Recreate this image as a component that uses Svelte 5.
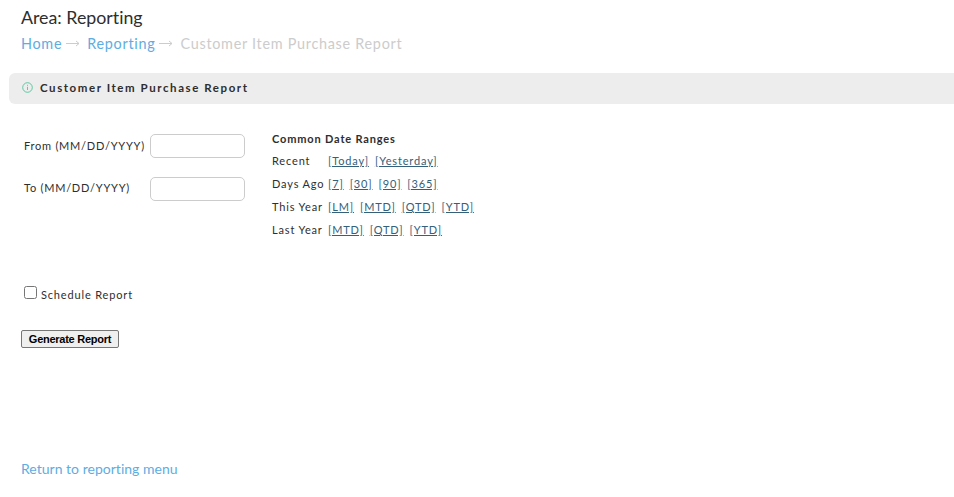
<script lang="ts">
  interface DateRange {
    label: string
    links: string[]
  }

  const ranges: DateRange[] = [
    { label: 'Recent', links: ['Today', 'Yesterday'] },
    { label: 'Days Ago', links: ['7', '30', '90', '365'] },
    { label: 'This Year', links: ['LM', 'MTD', 'QTD', 'YTD'] },
    { label: 'Last Year', links: ['MTD', 'QTD', 'YTD'] },
  ]

  let from = $state('')
  let to = $state('')
  let scheduled = $state(false)
</script>

{#snippet arrow()}
  <svg class="arrow" viewBox="0 0 14 8" width="14" height="8" fill="none" stroke="currentColor" aria-hidden="true">
    <path d="M0 4.5h13M10 2l3 2.5L10 7" />
  </svg>
{/snippet}

<main>
  <h1>Area: Reporting</h1>
  <nav class="crumbs">
    <a href="#home">Home</a>
    {@render arrow()}
    <a href="#reporting">Reporting</a>
    {@render arrow()}
    <span>Customer Item Purchase Report</span>
  </nav>

  <h2 class="bar">
    <svg viewBox="0 0 11 11" width="11" height="11" fill="none" stroke="currentColor" aria-hidden="true">
      <circle cx="5.5" cy="5.5" r="4.8" stroke-width=".9" />
      <path d="M5.5 2.8v1M5.5 4.8v3.2" stroke-width=".9" />
    </svg>
    Customer Item Purchase Report
  </h2>

  <form onsubmit={(e) => e.preventDefault()}>
    <div class="columns">
      <div class="dates">
        <label for="from">From (MM/DD/YYYY)</label>
        <input id="from" type="text" bind:value={from} />
        <label class="to" for="to">To (MM/DD/YYYY)</label>
        <input id="to" type="text" bind:value={to} />
      </div>

      <div class="ranges">
        <strong>Common Date Ranges</strong>
        {#each ranges as range}
          <div class="range">
            <span class="range-label">{range.label}</span>
            {#each range.links as link}
              <a href="#range">[{link}]</a>
            {/each}
          </div>
        {/each}
      </div>
    </div>

    <label class="schedule">
      <input type="checkbox" bind:checked={scheduled} />
      <span>Schedule Report</span>
    </label>

    <button type="submit">Generate Report</button>
  </form>

  <a class="return" href="#menu">Return to reporting menu</a>
</main>

<style>
  :global(body) {
    background: #fff;
    overflow: hidden;
  }

  main {
    padding: 6px 0 0 21px;
    font-family: Lato, sans-serif;
    font-size: 11px;
    font-variant-ligatures: none;
    letter-spacing: 0.84px;
    color: #2e2e2e;
  }

  h1 {
    margin: 0;
    font-size: 17.8px;
    font-weight: 400;
    line-height: 22px;
    letter-spacing: 0;
  }

  .crumbs {
    display: flex;
    align-items: center;
    height: 20px;
    margin-top: 5px;
    font-size: 14.4px;
    font-weight: 400;
    letter-spacing: 0.72px;
    color: #ccc;
  }
  .crumbs a { color: #5dade2; text-decoration: none; }
  .arrow { margin: 0 7px 0 4px; }

  .bar {
    display: flex;
    align-items: center;
    gap: 7px;
    height: 31px;
    box-sizing: border-box;
    margin: 20px 0 0 -12px;
    padding: 0 0 2px 13px;
    background: #ededed;
    border-radius: 6px 0 0 6px;
    font-size: 11.5px;
    font-weight: 700;
    letter-spacing: 1.57px;
  }
  .bar svg { color: #50c49a; margin-top: -1px; }

  .columns {
    display: flex;
    align-items: flex-start;
    gap: 27px;
    padding: 27px 0 0 3px;
  }

  .dates {
    display: grid;
    grid-template-columns: 126px 95px;
    row-gap: 19px;
    padding-top: 3px;
    line-height: 24px;
    letter-spacing: 0.76px;
  }
  .dates .to { line-height: 22px; }
  .dates input {
    box-sizing: border-box;
    width: 95px;
    height: 24px;
    border: 1px solid #ccc;
    border-radius: 5px;
    background: #fff;
  }

  .ranges strong { display: block; line-height: 16px; margin-bottom: 2px; }
  .range {
    display: flex;
    gap: 6px;
    height: 23px;
    line-height: 23px;
  }
  .range-label { width: 50px; white-space: nowrap; }
  .range a { color: #34607a; }

  .schedule {
    display: flex;
    align-items: flex-start;
    width: max-content;
    margin-top: 44px;
    padding-left: 3px;
  }
  .schedule input { width: 13px; height: 13px; margin: 1px 4px 0 0; }
  .schedule span { padding-top: 2px; line-height: 16px; }

  button {
    display: block;
    box-sizing: border-box;
    width: 98px;
    height: 18px;
    margin-top: 27px;
    padding: 0;
    border: 1px solid #767676;
    border-radius: 2px;
    background: #efefef;
    color: #000;
    font: bold 11px 'Liberation Sans', Arial, sans-serif;
    letter-spacing: -0.26px;
  }

  .return {
    display: block;
    width: max-content;
    margin-top: 112px;
    font-size: 14px;
    line-height: 18px;
    letter-spacing: 0.02px;
    color: #5dade2;
    text-decoration: none;
  }
</style>
